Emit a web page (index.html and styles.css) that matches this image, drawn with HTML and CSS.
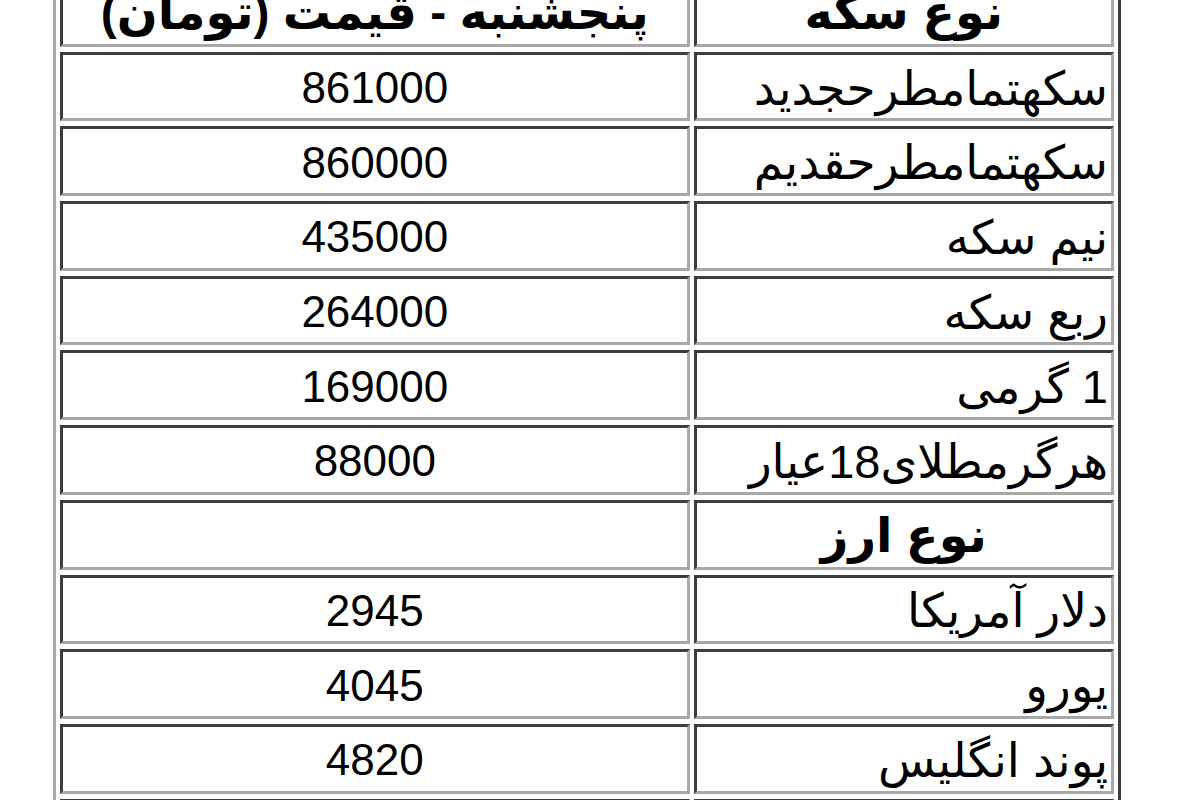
FILE: index.html
```html
<!DOCTYPE html>
<html lang="fa">
<head>
<meta charset="utf-8">
<title>قیمت سکه و ارز</title>
<link rel="stylesheet" href="styles.css">
</head>
<body>
<table class="prices" dir="rtl">
  <colgroup>
    <col class="col-name">
    <col class="col-price">
  </colgroup>
  <tr class="head">
    <td class="name center">نوع سکه</td>
    <td class="price">پنجشنبه - قیمت (تومان)</td>
  </tr>
  <tr><td class="name">سکهتمامطرحجدید</td><td class="price">861000</td></tr>
  <tr><td class="name">سکهتمامطرحقدیم</td><td class="price">860000</td></tr>
  <tr><td class="name">نیم سکه</td><td class="price">435000</td></tr>
  <tr><td class="name">ربع سکه</td><td class="price">264000</td></tr>
  <tr><td class="name">1 گرمی</td><td class="price">169000</td></tr>
  <tr><td class="name">هرگرمطلای18عیار</td><td class="price">88000</td></tr>
  <tr class="head"><td class="name center">نوع ارز</td><td class="price"></td></tr>
  <tr><td class="name">دلار آمریکا</td><td class="price">2945</td></tr>
  <tr><td class="name">یورو</td><td class="price">4045</td></tr>
  <tr><td class="name">پوند انگلیس</td><td class="price">4820</td></tr>
  <tr><td class="name"></td><td class="price"></td></tr>
</table>
</body>
</html>
```

FILE: styles.css
```css
html, body {
  margin: 0;
  padding: 0;
  background: #ffffff;
  overflow: hidden;
}

.prices {
  margin: -31px 0 0 53px;
  width: 1068px;
  table-layout: fixed;
  border-collapse: separate;
  border-spacing: 4px 5.5px;
  border-style: solid;
  border-width: 3px;
  border-color: #a8a8a8 #3c3c3c #3c3c3c #a8a8a8;
  font-family: "Liberation Sans", "DejaVu Sans", sans-serif;
  font-size: 44px;
  color: #000;
}

.col-name { width: 420px; }
.col-price { width: 629px; }

.prices td {
  height: 60.7px;
  padding: 3px 3px 0;
  border-style: solid;
  border-width: 3px;
  border-color: #3c3c3c #a8a8a8 #a8a8a8 #3c3c3c;
  vertical-align: middle;
  white-space: nowrap;
  line-height: 1;
}

.name {
  text-align: right;
  font-size: 47px;
}

.price {
  text-align: center;
}

.center {
  text-align: center;
}

.head td {
  font-weight: bold;
  font-size: 48px;
}
```
